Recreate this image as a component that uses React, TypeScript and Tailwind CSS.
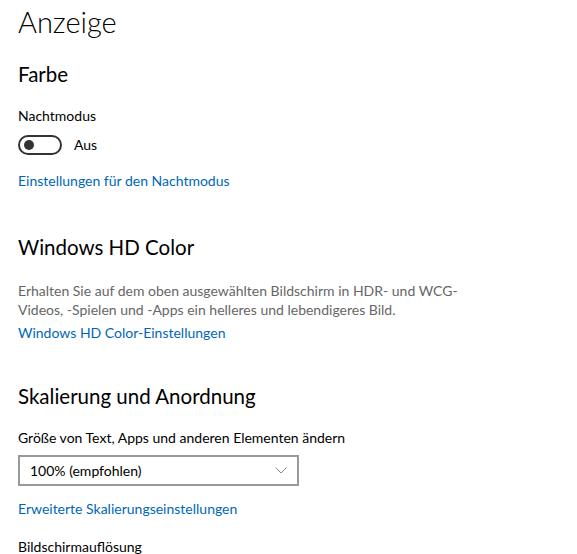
export default function App() {
  return (
    <div className="min-h-screen bg-white pl-[18px] pt-[2px] font-['Lato','Noto_Sans',sans-serif] text-black">
      <h1 className="text-[29px] font-light leading-[40px]">Anzeige</h1>

      {/* Farbe */}
      <h2 className="mt-[18px] text-[20.5px] font-normal leading-[28px]">Farbe</h2>
      <p className="mt-[18px] text-[14px] leading-[20px]">Nachtmodus</p>
      <div className="mt-[9px] flex items-center">
        <div className="flex h-[20px] w-[44px] items-center rounded-full border-2 border-[#333333] pl-[4px]">
          <div className="h-[10px] w-[10px] rounded-full bg-[#333333]" />
        </div>
        <span className="ml-[12px] text-[14px] leading-[20px]">Aus</span>
      </div>
      <a className="mt-[16px] block text-[14px] leading-[20px] text-[#0067b8]">
        Einstellungen für den Nachtmodus
      </a>

      {/* HD Color */}
      <h2 className="mt-[42px] text-[20.5px] font-normal leading-[28px]">Windows HD Color</h2>
      <p className="mt-[20px] w-[460px] text-[14px] leading-[19px] text-[#666666]">
        Erhalten Sie auf dem oben ausgewählten Bildschirm in HDR- und WCG-Videos, -Spielen und -Apps ein
        helleres und lebendigeres Bild.
      </p>
      <a className="mt-[4px] block text-[14px] leading-[20px] text-[#0067b8]">
        Windows HD Color-Einstellungen
      </a>

      {/* Skalierung */}
      <h2 className="mt-[39px] text-[20.5px] font-normal leading-[28px]">Skalierung und Anordnung</h2>
      <p className="mt-[18px] text-[14px] leading-[20px]">
        Größe von Text, Apps und anderen Elementen ändern
      </p>
      <div className="mt-[7px] flex h-[31px] w-[281px] items-center justify-between border-2 border-[#999999] pl-[10px] pr-[10px]">
        <span className="text-[14px] leading-[20px]">100% (empfohlen)</span>
        <svg width="12" height="7" viewBox="0 0 12 7" fill="none">
          <path d="M0.5 0.5 L6 6 L11.5 0.5" stroke="#888888" strokeWidth="1" />
        </svg>
      </div>
      <a className="mt-[13px] block text-[14px] leading-[20px] text-[#0067b8]">
        Erweiterte Skalierungseinstellungen
      </a>
      <p className="mt-[18px] text-[14px] leading-[20px]">Bildschirmauflösung</p>
    </div>
  );
}
